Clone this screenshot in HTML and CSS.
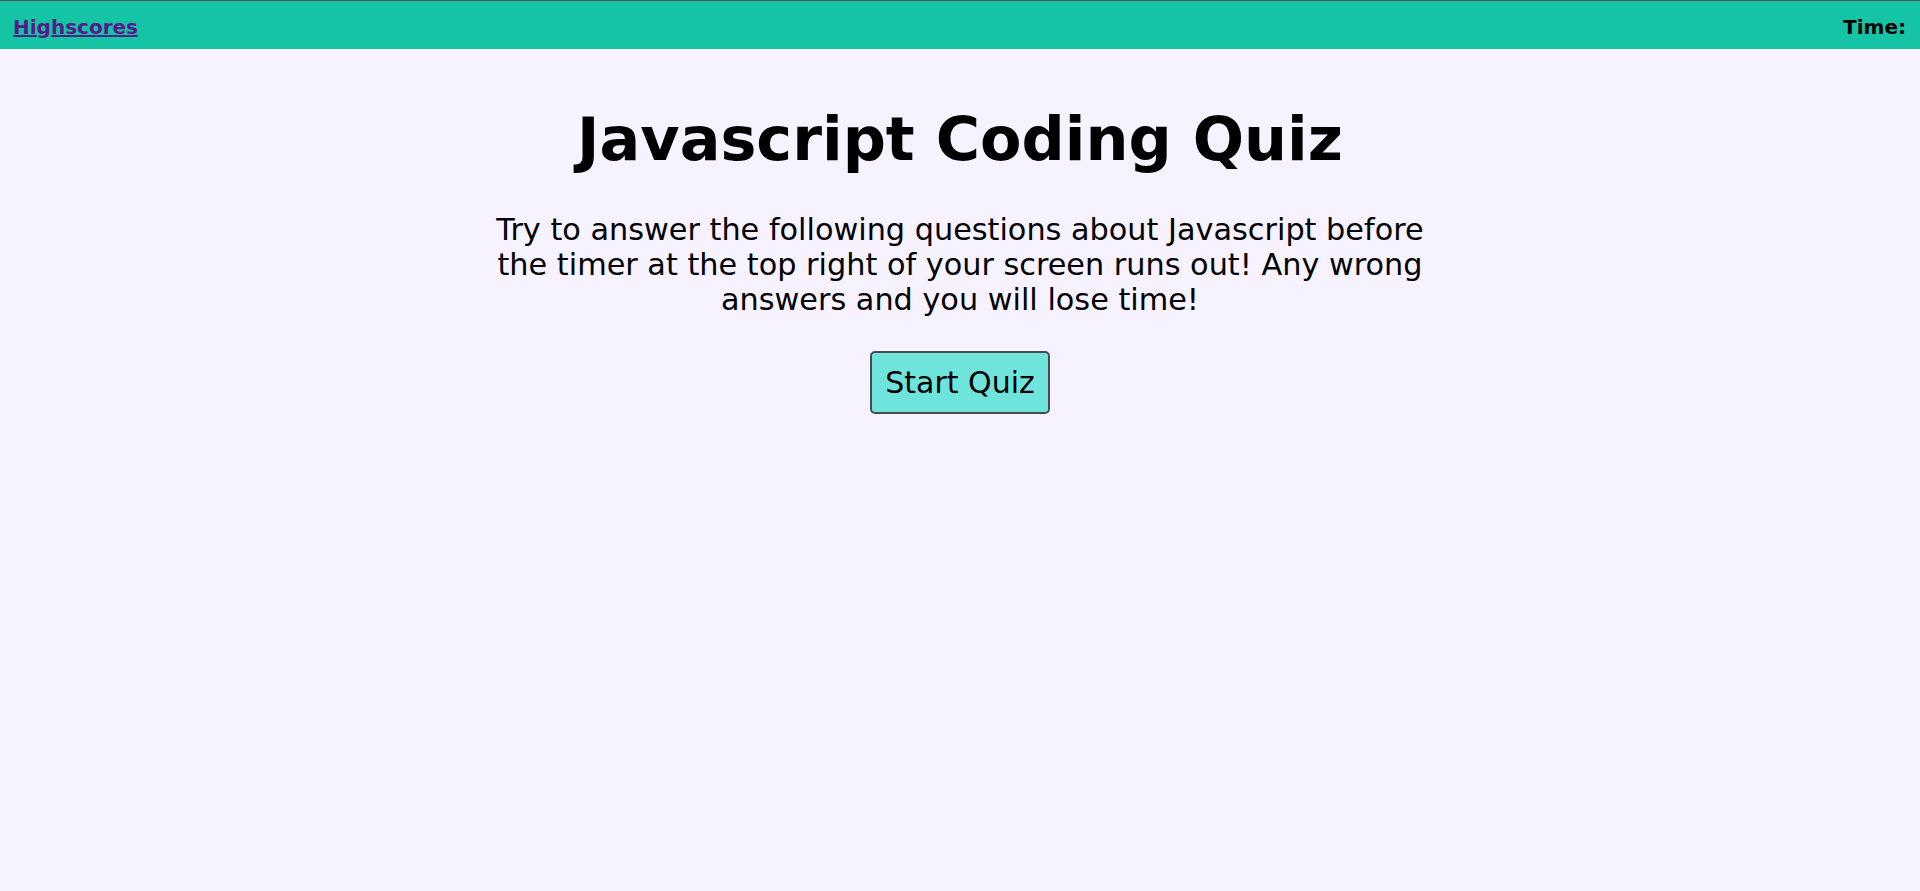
FILE: index.html
```html
<!DOCTYPE html>
<html lang="en">
<head>
<meta charset="utf-8">
<title>Javascript Coding Quiz</title>
<link rel="stylesheet" href="styles.css">
</head>
<body>
<header class="topbar">
  <a class="scores-link" href="#">Highscores</a>
  <div class="timer">Time: <span class="time-value"></span></div>
</header>
<main class="intro">
  <h1 class="title">Javascript Coding Quiz</h1>
  <p class="lead">Try to answer the following questions about Javascript before the timer at the top right of your screen runs out! Any wrong answers and you will lose time!</p>
  <button class="start-btn" type="button">Start Quiz</button>
</main>
</body>
</html>
```

FILE: styles.css
```css
html, body {
  margin: 0;
  padding: 0;
}
body {
  background: #f7f2ff;
  font-family: "DejaVu Sans", Verdana, sans-serif;
  color: #000;
  min-height: 100vh;
}
.topbar {
  display: flex;
  justify-content: space-between;
  align-items: center;
  height: 48px;
  border-top: 1px solid #555;
  background: #14c4a4;
  padding: 0 14px 0 13px;
  box-sizing: content-box;
}
.scores-link {
  color: #551a8b;
  font-weight: bold;
  font-size: 20px;
  text-decoration: underline;
  margin-top: 3px;
}
.timer {
  font-weight: bold;
  font-size: 20px;
  margin-top: 3px;
}
.intro {
  display: flex;
  flex-direction: column;
  align-items: center;
  text-align: center;
}
.title {
  font-size: 60.4px;
  font-weight: bold;
  margin: 55px 0 0;
  line-height: normal;
}
.lead {
  width: 50%;
  font-size: 30.3px;
  margin: 38px 0 0;
  line-height: normal;
}
.start-btn {
  margin-top: 34px;
  font-family: "DejaVu Sans", Verdana, sans-serif;
  font-size: 30px;
  line-height: normal;
  color: #000;
  background: #6ee4dc;
  border: 2px solid #4a4a4a;
  border-radius: 5px;
  padding: 12px 13px;
  cursor: pointer;
}
```
